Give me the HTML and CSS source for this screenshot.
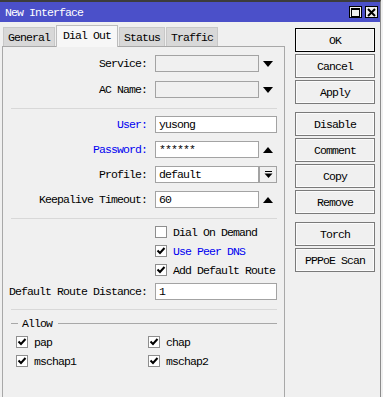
FILE: index.html
```html
<!DOCTYPE html>
<html>
<head>
<meta charset="utf-8">
<link rel="stylesheet" href="styles.css">
</head>
<body>
<div class="window">
  <div class="titlebar">
    <span class="title">New Interface</span>
    <div class="wbtns">
      <span class="wbtn"><svg width="9" height="9" viewBox="0 0 9 9"><rect x="0.5" y="0.5" width="8" height="8" fill="none" stroke="#000"/><line x1="0" y1="1.5" x2="9" y2="1.5" stroke="#000"/></svg></span>
      <span class="wbtn"><svg width="9" height="9" viewBox="0 0 9 9"><path d="M1 1L8 8M8 1L1 8" stroke="#000" stroke-width="2"/></svg></span>
    </div>
  </div>
  <div class="body">
    <div class="left">
      <div class="tabs">
        <span class="tab">General</span>
        <span class="tab active">Dial Out</span>
        <span class="tab">Status</span>
        <span class="tab">Traffic</span>
      </div>
      <div class="panel">
        <div class="row first">
          <label class="lbl">Service:</label>
          <span class="input dis short"></span>
          <span class="arrow"><svg width="10" height="6" viewBox="0 0 10 6"><path d="M0 0H10L5 6Z" fill="#000"/></svg></span>
        </div>
        <div class="row r2">
          <label class="lbl">AC Name:</label>
          <span class="input dis short"></span>
          <span class="arrow"><svg width="10" height="6" viewBox="0 0 10 6"><path d="M0 0H10L5 6Z" fill="#000"/></svg></span>
        </div>
        <div class="sep"></div>
        <div class="row">
          <label class="lbl blue">User:</label>
          <span class="input full">yusong</span>
        </div>
        <div class="row r3">
          <label class="lbl blue">Password:</label>
          <span class="input short">******</span>
          <span class="arrow"><svg width="10" height="6" viewBox="0 0 10 6"><path d="M0 6H10L5 0Z" fill="#000"/></svg></span>
        </div>
        <div class="row r3">
          <label class="lbl">Profile:</label>
          <span class="input short">default</span>
          <span class="ddbtn"><svg width="9" height="9" viewBox="0 0 9 9"><rect x="1" y="1" width="7" height="1" fill="#000"/><path d="M0.5 3.5H8.5L4.5 8Z" fill="#000"/></svg></span>
        </div>
        <div class="row r3">
          <label class="lbl">Keepalive Timeout:</label>
          <span class="input short">60</span>
          <span class="arrow"><svg width="10" height="6" viewBox="0 0 10 6"><path d="M0 6H10L5 0Z" fill="#000"/></svg></span>
        </div>
        <div class="sep"></div>
        <div class="crow">
          <span class="cb"></span><span class="ctext">Dial On Demand</span>
        </div>
        <div class="crow">
          <span class="cb on"><svg width="10" height="10" viewBox="0 0 10 10"><path d="M1.5 4.5L4 7L8.5 2" fill="none" stroke="#000" stroke-width="2"/></svg></span><span class="ctext blue">Use Peer DNS</span>
        </div>
        <div class="crow">
          <span class="cb on"><svg width="10" height="10" viewBox="0 0 10 10"><path d="M1.5 4.5L4 7L8.5 2" fill="none" stroke="#000" stroke-width="2"/></svg></span><span class="ctext">Add Default Route</span>
        </div>
        <div class="row r4">
          <label class="lbl">Default Route Distance:</label>
          <span class="input full">1</span>
        </div>
        <div class="sep sep2"></div>
        <div class="group">
          <span class="gline short"></span><span class="gtitle">Allow</span><span class="gline long"></span>
        </div>
        <div class="grid">
          <div class="gitem"><span class="cb on"><svg width="10" height="10" viewBox="0 0 10 10"><path d="M1.5 4.5L4 7L8.5 2" fill="none" stroke="#000" stroke-width="2"/></svg></span><span class="ctext">pap</span></div>
          <div class="gitem"><span class="cb on"><svg width="10" height="10" viewBox="0 0 10 10"><path d="M1.5 4.5L4 7L8.5 2" fill="none" stroke="#000" stroke-width="2"/></svg></span><span class="ctext">chap</span></div>
          <div class="gitem"><span class="cb on"><svg width="10" height="10" viewBox="0 0 10 10"><path d="M1.5 4.5L4 7L8.5 2" fill="none" stroke="#000" stroke-width="2"/></svg></span><span class="ctext">mschap1</span></div>
          <div class="gitem"><span class="cb on"><svg width="10" height="10" viewBox="0 0 10 10"><path d="M1.5 4.5L4 7L8.5 2" fill="none" stroke="#000" stroke-width="2"/></svg></span><span class="ctext">mschap2</span></div>
        </div>
      </div>
    </div>
    <div class="side">
      <div class="bgroup">
        <span class="btn default">OK</span>
        <span class="btn">Cancel</span>
        <span class="btn">Apply</span>
      </div>
      <div class="bgroup">
        <span class="btn">Disable</span>
        <span class="btn">Comment</span>
        <span class="btn">Copy</span>
        <span class="btn">Remove</span>
      </div>
      <div class="bgroup">
        <span class="btn">Torch</span>
        <span class="btn">PPPoE Scan</span>
      </div>
    </div>
  </div>
</div>
</body>
</html>
```

FILE: styles.css
```css
* { box-sizing: border-box; }
html, body { margin: 0; padding: 0; }
body {
  width: 383px;
  height: 397px;
  overflow: hidden;
  background: #f0f0f0;
  font-family: "Liberation Mono", "Courier New", monospace;
  font-size: 11.5px;
  letter-spacing: -0.9px;
  color: #000;
}
.window {
  width: 381px;
  height: 397px;
  border-top: 2px solid #3c3c3c;
  border-right: 1px solid #8c8c8c;
  background: #f0f0f0;
  display: flex;
  flex-direction: column;
}
.titlebar {
  height: 20px;
  background: #4b50c9;
  display: flex;
  align-items: center;
  justify-content: space-between;
  padding: 0 2px 0 5px;
}
.title { color: #fff; }
.wbtns { display: flex; gap: 3px; }
.wbtn {
  width: 13px;
  height: 12px;
  background: #f0f0f0;
  border: 1px solid #000;
  display: flex;
  align-items: center;
  justify-content: center;
}
.wbtn svg { display: block; }
.body { display: flex; flex: 1; }
.left { width: 285px; display: flex; flex-direction: column; }
.tabs {
  display: flex;
  align-items: flex-end;
  padding: 3px 0 0 3px;
  height: 24px;
  position: relative;
  z-index: 1;
}
.tab {
  height: 19px;
  background: #d8d8d8;
  border: 1px solid #c8c8c8;
  border-bottom: none;
  padding: 0 4px;
  display: flex;
  align-items: center;
  margin-right: 1px;
}
.tab.active {
  height: 22px;
  background: #f7f7f7;
  border-color: #bdbdbd;
  padding: 0 6px 3px;
  margin-bottom: -1px;
}
.panel {
  margin-left: 2px;
  flex: 1;
  border: 1px solid #a8a8a8;
  border-bottom: none;
  background: #f0f0f0;
  padding: 8px 0 0 0;
}
.row {
  display: flex;
  align-items: center;
  height: 17px;
}
.r2 { margin-top: 9px; }
.r3 { margin-top: 8px; }
.r4 { margin-top: 7px; }
.lbl {
  width: 144px;
  text-align: right;
  margin-right: 8px;
  white-space: nowrap;
}
.blue { color: #0000f0; }
.input {
  height: 17px;
  border: 1px solid #a3a3a3;
  background: #fff;
  padding: 0 3px;
  display: flex;
  align-items: center;
  white-space: nowrap;
}
.input.dis { background: #f0f0f0; }
.input.short { width: 104px; }
.input.full { width: 122px; }
.arrow {
  width: 18px;
  display: flex;
  justify-content: center;
}
.arrow svg { display: block; }
.ddbtn {
  width: 18px;
  height: 17px;
  border: 1px solid #a3a3a3;
  display: flex;
  align-items: center;
  justify-content: center;
}
.ddbtn svg { display: block; }
.sep {
  height: 1px;
  background: #d8d8d8;
  margin: 10px 7px 7px 8px;
}
.sep2 { margin: 9px 7px 0 8px; }
.crow {
  display: flex;
  align-items: center;
  height: 12px;
  margin-left: 152px;
}
.crow + .crow { margin-top: 7px; }
.cb {
  width: 12px;
  height: 12px;
  border: 1px solid #8e8e8e;
  background: #fff;
  display: flex;
  align-items: center;
  justify-content: center;
  flex: none;
}
.cb svg { display: block; }
.ctext { margin-left: 6px; white-space: nowrap; }
.group {
  display: flex;
  align-items: center;
  height: 12px;
  margin: 7px 7px 0 8px;
}
.gline { height: 1px; background: #a8a8a8; }
.gline.short { width: 7px; }
.gline.long { flex: 1; }
.gtitle { margin: 0 6px 0 4px; }
.grid {
  display: grid;
  grid-template-columns: 132px 132px;
  row-gap: 7px;
  margin: 7px 0 0 13px;
}
.gitem { display: flex; align-items: center; height: 12px; }
.side {
  margin-left: 10px;
  padding-top: 6px;
  display: flex;
  flex-direction: column;
  gap: 8px;
  width: 80px;
}
.bgroup { display: flex; flex-direction: column; gap: 2px; }
.btn {
  height: 24px;
  border: 1px solid #7a7a7a;
  box-shadow: inset 0 0 0 1px #fbfbfb;
  background: #f0f0f0;
  display: flex;
  align-items: center;
  justify-content: center;
  white-space: nowrap;
}
.btn.default { border-color: #000; }
```
